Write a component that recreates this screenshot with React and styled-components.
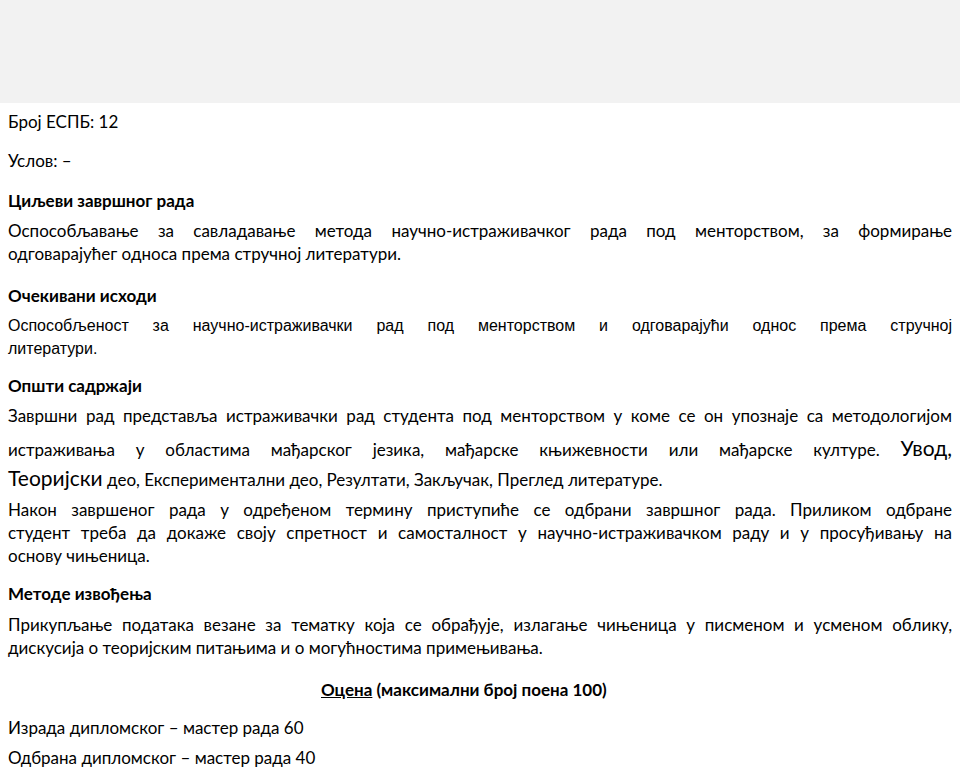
import React from "react";
import styled, { createGlobalStyle } from "styled-components";

const Global = createGlobalStyle`
  body { margin: 0; background: #fff; }
`;
const Band = styled.div`height: 103px; background: #f2f2f2;`;
const Page = styled.div`
  padding: 0 8px; width: 944px; color: #000;
  font-family: Lato, "Open Sans", sans-serif; font-size: 17px;
`;
const Line = styled.div`
  line-height: 23px; height: 23px; white-space: nowrap;
  margin-top: ${p => p.$mt || 0}px;
  font-weight: ${p => (p.$bold ? 700 : 400)};
  font-family: ${p => (p.$arial ? '"Liberation Sans", Arial, sans-serif' : "inherit")};
  font-size: ${p => (p.$arial ? 16 : 17)}px;
  padding-left: ${p => p.$indent || 0}px;
  ${p => p.$just && `text-align: justify; text-align-last: justify; white-space: normal;`}
`;
const Big = styled.span`font-size: 21px;`;
const U = styled.span`text-decoration: underline;`;

export default function App() {
  return (
    <>
      <Global />
      <Band />
      <Page>
        <Line $mt={7}>Број ЕСПБ: 12</Line>
        <Line $mt={16}>Услов: –</Line>
        <Line $mt={17} $bold>Циљеви завршног рада</Line>
        <Line $mt={7} $just>Оспособљавање за савладавање метода научно-истраживачког рада под менторством, за формирање</Line>
        <Line>одговарајућег односа према стручној литератури.</Line>
        <Line $mt={19} $bold>Очекивани исходи</Line>
        <Line $mt={7} $just $arial>Оспособљеност за научно-истраживачки рад под менторством и одговарајући однос према стручној</Line>
        <Line $arial>литератури.</Line>
        <Line $mt={14} $bold>Општи садржаји</Line>
        <Line $mt={7} $just>Завршни рад представља истраживачки рад студента под менторством у коме се он упознаје са методологијом</Line>
        <Line $mt={9} $just>истраживања у областима мађарског језика, мађарске књижевности или мађарске културе. <Big>Увод,</Big></Line>
        <Line $mt={7}><Big>Теоријски</Big> део, Експериментални део, Резултати, Закључак, Преглед литературе.</Line>
        <Line $mt={9} $just>Након завршеног рада у одређеном термину приступиће се одбрани завршног рада. Приликом одбране</Line>
        <Line $just>студент треба да докаже своју спретност и самосталност у научно-истраживачком раду и у просуђивању на</Line>
        <Line>основу чињеница.</Line>
        <Line $mt={15} $bold>Методе извођења</Line>
        <Line $mt={8} $just>Прикупљање података везане за тематку која се обрађује, излагање чињеница у писменом и усменом облику,</Line>
        <Line>дискусија о теоријским питањима и о могућностима примењивања.</Line>
        <Line $mt={19} $bold $indent={313}><U>Оцена</U> (максимални број поена 100)</Line>
        <Line $mt={15}>Израда дипломског – мастер рада 60</Line>
        <Line $mt={7}>Одбрана дипломског – мастер рада 40</Line>
      </Page>
    </>
  );
}
